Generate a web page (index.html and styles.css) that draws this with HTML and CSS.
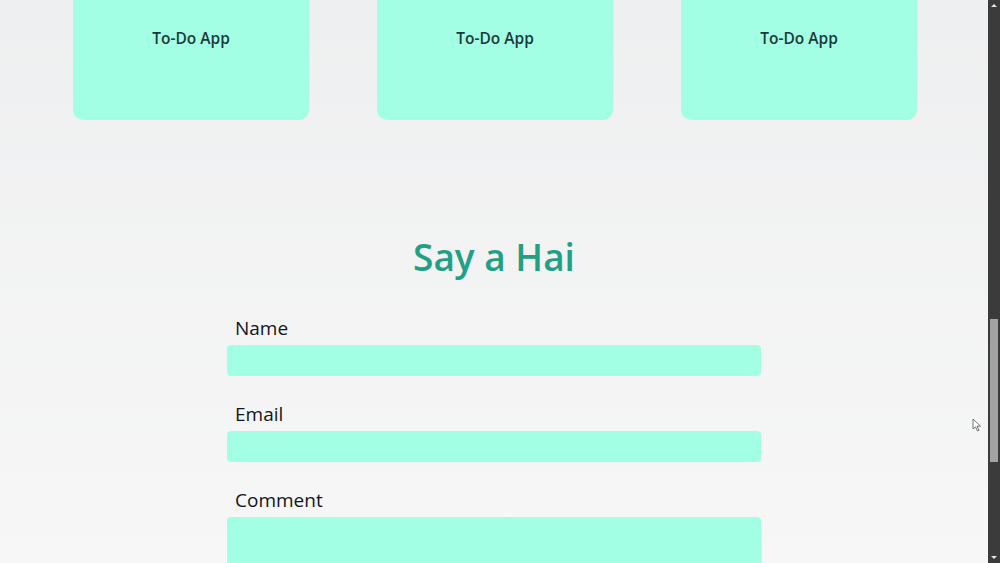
FILE: index.html
```html
<!DOCTYPE html>
<html lang="en">
<head>
    <meta charset="UTF-8">
    <meta name="viewport" content="width=device-width, initial-scale=1.0">
    <title>Portfolio</title>
    <link rel="stylesheet" href="styles.css">
</head>
<body>
    <div class="window">
        <main class="page">
            <!-- Projetos -->
            <section class="projects">
                <div class="card"><h3>To-Do App</h3></div>
                <div class="card"><h3>To-Do App</h3></div>
                <div class="card"><h3>To-Do App</h3></div>
            </section>

            <!-- Contato -->
            <section class="contact">
                <h2>Say a Hai</h2>
                <form class="form">
                    <label for="name">Name</label>
                    <input type="text" id="name">
                    <label for="email">Email</label>
                    <input type="email" id="email">
                    <label for="comment">Comment</label>
                    <textarea id="comment"></textarea>
                </form>
            </section>
        </main>

        <div class="scrollbar">
            <span class="arrow up"></span>
            <div class="track"><div class="thumb"></div></div>
            <span class="arrow down"></span>
        </div>

        <svg class="cursor" width="10" height="14" viewBox="0 0 10 14">
            <path d="M1 1 L1 11 L3.5 8.8 L5.5 13 L7 12.3 L5 8.2 L8.5 8.2 Z" fill="#fff" stroke="#555" stroke-width="0.8"/>
        </svg>
    </div>
</body>
</html>
```

FILE: styles.css
```css
/* Estilos globais */
* {
    margin: 0;
    padding: 0;
    box-sizing: border-box;
    font-family: 'Open Sans', 'Noto Sans', sans-serif;
}

body {
    height: 563px;
    overflow: hidden;
}

.window {
    position: relative;
    display: flex;
    height: 563px;
}

.page {
    flex: 1;
    overflow: hidden;
    background: linear-gradient(180deg, #eeeff0 0%, #f7f7f7 100%);
}

/* Cards de projetos */
.projects {
    display: flex;
    justify-content: center;
    gap: 68px;
    margin-top: -80px;
    padding-left: 2px;
}

.card {
    width: 236px;
    height: 200px;
    padding-top: 107px;
    background-color: #a3ffe3;
    border-radius: 10px;
    text-align: center;
}

.card h3 {
    font-size: 15.5px;
    font-weight: 600;
    color: #1d3a3a;
    line-height: 22px;
}

/* Formulario */
.contact {
    margin-top: 110px;
}

.contact h2 {
    text-align: center;
    font-size: 37px;
    font-weight: 600;
    line-height: 54px;
    color: #22a085;
    margin-bottom: 31px;
}

.form {
    width: 534px;
    margin: 0 auto;
    display: flex;
    flex-direction: column;
}

.form label {
    font-size: 19px;
    line-height: 26px;
    padding-left: 8px;
    color: #141420;
    margin-bottom: 4px;
}

.form input,
.form textarea {
    height: 31px;
    border: none;
    border-radius: 4px;
    background-color: #a3ffe3;
    margin-bottom: 25px;
}

.form textarea {
    height: 120px;
    resize: none;
}

/* Barra de rolagem */
.scrollbar {
    width: 12px;
    background-color: #3b3b3b;
    display: flex;
    flex-direction: column;
    align-items: center;
}

.arrow {
    width: 0;
    height: 0;
    border-left: 3px solid transparent;
    border-right: 3px solid transparent;
    margin: 4px 0;
}

.arrow.up {
    border-bottom: 3px solid #e6e6e6;
}

.arrow.down {
    border-top: 3px solid #e6e6e6;
}

.track {
    flex: 1;
    width: 100%;
    padding: 0 2px;
}

.thumb {
    height: 143px;
    margin-top: 308px;
    background-color: #a3a3a3;
}

.cursor {
    position: absolute;
    left: 972px;
    top: 418px;
}
```
